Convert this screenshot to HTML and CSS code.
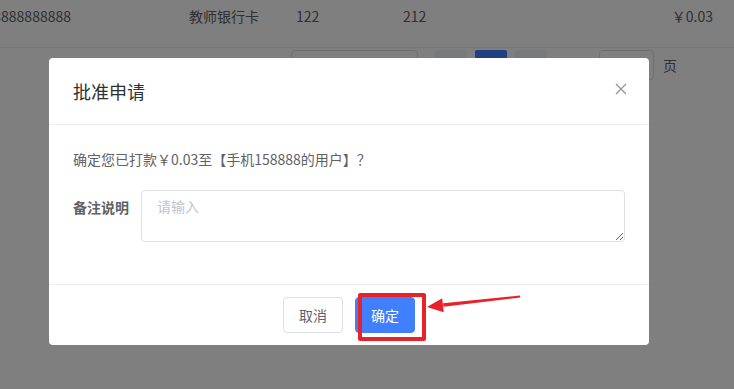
FILE: index.html
```html
<!DOCTYPE html>
<html lang="zh-CN">
<head>
<meta charset="utf-8">
<title>批准申请</title>
<link rel="stylesheet" href="styles.css">
</head>
<body>
<div class="page">
  <div class="row">
    <div class="cell cell-phone"><span>13888888888</span></div>
    <div class="cell cell-type">教师银行卡</div>
    <div class="cell cell-num">122</div>
    <div class="cell cell-num">212</div>
    <div class="cell cell-amount">￥0.03</div>
  </div>
  <div class="pager">
    <div class="pager-select"></div>
    <div class="pager-btn"></div>
    <div class="pager-btn active"></div>
    <div class="pager-btn"></div>
    <div class="pager-input"></div>
    <div class="pager-unit">页</div>
  </div>
</div>

<div class="mask"></div>

<div class="dialog">
  <div class="dialog-header">
    <span class="dialog-title">批准申请</span>
    <svg class="dialog-close" width="12" height="12" viewBox="0 0 12 12"><path d="M1 1 L11 11 M11 1 L1 11" stroke="#909399" stroke-width="1.2" fill="none"/></svg>
  </div>
  <div class="dialog-body">
    <p class="confirm-text">确定您已打款￥0.03至【手机158888的用户】？</p>
    <div class="form-row">
      <label class="form-label">备注说明</label>
      <textarea class="form-textarea" placeholder="请输入"></textarea>
    </div>
  </div>
  <div class="dialog-footer">
    <button class="btn btn-default">取消</button>
    <button class="btn btn-primary">确定</button>
  </div>
</div>

<div class="annot-box"></div>
<svg class="annot-arrow" width="734" height="389" viewBox="0 0 734 389">
  <polygon points="520,295.6 520.3,297.6 443.5,306.8 443,303.2" fill="#e8212b"/>
  <polygon points="427,307 442.2,298.3 443.7,312.3" fill="#e8212b"/>
</svg>
</body>
</html>
```

FILE: styles.css
```css
* { box-sizing: border-box; }
html, body {
  margin: 0;
  padding: 0;
  width: 734px;
  height: 389px;
  overflow: hidden;
  background: #ffffff;
  font-family: "Noto Sans CJK SC", "Microsoft YaHei", sans-serif;
  font-size: 14px;
  color: #606266;
}

.page { width: 734px; }

.row {
  display: flex;
  align-items: center;
  height: 48px;
  padding-bottom: 16px;
  padding-top: 0;
  border-bottom: 1px solid #ebeef5;
  height: 48px;
}
.row .cell { line-height: 32px; white-space: nowrap; }
.cell-phone {
  width: 71px;
  display: flex;
  justify-content: flex-end;
  overflow: visible;
}
.cell-type { margin-left: 118px; width: 107px; }
.cell-num { width: 107px; }
.cell-amount { flex: 1; text-align: right; padding-right: 21px; }

.pager {
  display: flex;
  align-items: center;
  height: 30px;
  margin-top: 2px;
  padding-left: 291px;
}
.pager-select {
  width: 127px;
  height: 30px;
  border: 1px solid #dcdfe6;
  border-radius: 4px;
}
.pager-btn {
  width: 32px;
  height: 30px;
  background: #f0f2f5;
  border-radius: 2px;
  margin-left: 8px;
}
.pager-select + .pager-btn { margin-left: 17px; }
.pager-btn.active { background: #4080ff; }
.pager-input {
  width: 55px;
  height: 30px;
  margin-left: 52px;
  border: 1px solid #dcdfe6;
  border-radius: 4px;
}
.pager-unit { margin-left: 9px; color: #606266; }

.mask {
  position: absolute;
  inset: 0;
  background: rgba(0, 0, 0, 0.5);
}

.dialog {
  position: absolute;
  left: 49px;
  top: 58px;
  width: 600px;
  background: #ffffff;
  border-radius: 4px;
  display: flex;
  flex-direction: column;
}
.dialog-header {
  display: flex;
  justify-content: space-between;
  align-items: center;
  padding: 20px 22px 20px 24px;
  border-bottom: 1px solid #ebeef5;
}
.dialog-title {
  font-size: 18px;
  line-height: 26px;
  color: #303133;
}
.dialog-close { margin-top: -4px; }

.dialog-body {
  padding: 24px 24px 42px 24px;
}
.confirm-text {
  margin: 0 0 21px 0;
  line-height: 20px;
  color: #606266;
}
.form-row { display: flex; }
.form-label {
  width: 68px;
  flex: none;
  padding-top: 7px;
  line-height: 20px;
  font-weight: bold;
  color: #606266;
}
.form-textarea {
  flex: 1;
  height: 52px;
  margin: 0;
  padding: 5px 15px;
  border: 1px solid #dcdfe6;
  border-radius: 4px;
  font-family: inherit;
  font-size: 14px;
  line-height: 21px;
  color: #606266;
  resize: vertical;
  outline: none;
}
.form-textarea::placeholder { color: #c0c4cc; }

.dialog-footer {
  display: flex;
  justify-content: center;
  gap: 12px;
  padding: 12px 24px;
  border-top: 1px solid #ebeef5;
}
.btn {
  width: 60px;
  height: 36px;
  border-radius: 4px;
  font-family: inherit;
  font-size: 14px;
  cursor: pointer;
  padding: 0;
}
.btn-default {
  background: #ffffff;
  border: 1px solid #dcdfe6;
  color: #606266;
}
.btn-primary {
  background: #4080ff;
  border: 1px solid #4080ff;
  color: #ffffff;
}

.annot-box {
  position: absolute;
  left: 358px;
  top: 293px;
  width: 68px;
  height: 48px;
  border: 4px solid #e8212b;
  border-radius: 2px;
}
.annot-arrow {
  position: absolute;
  left: 0;
  top: 0;
  pointer-events: none;
}
```
